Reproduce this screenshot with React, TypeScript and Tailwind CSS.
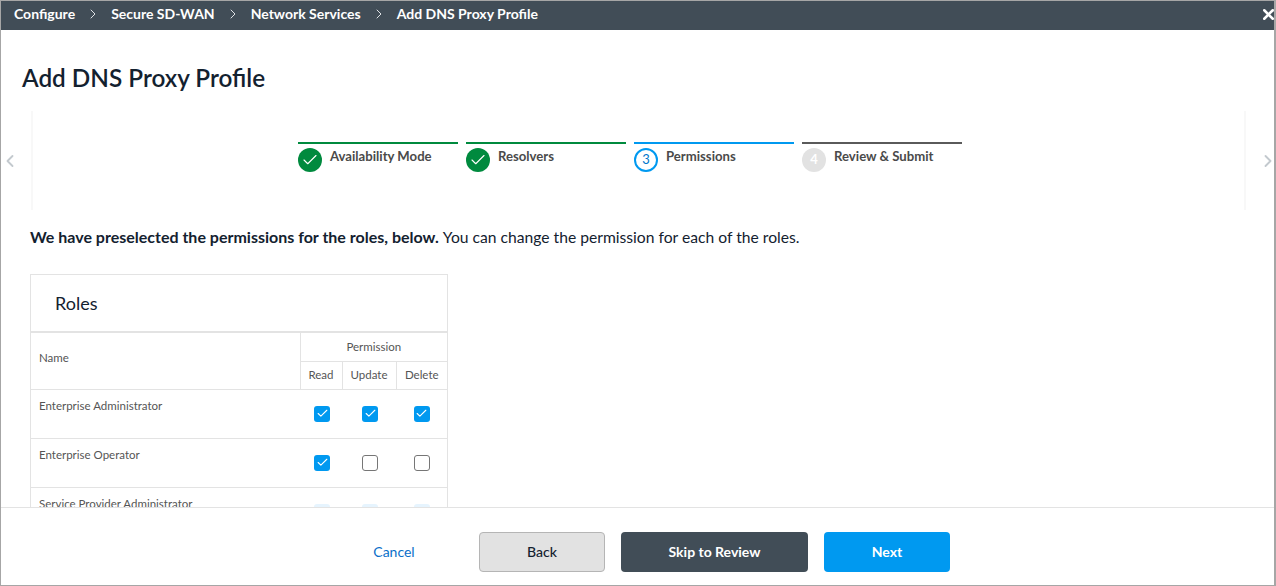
import { Check, ChevronLeft, ChevronRight, X } from 'lucide-react'

const crumbs = ['Configure', 'Secure SD-WAN', 'Network Services', 'Add DNS Proxy Profile']

const roles = [
  { name: 'Enterprise Administrator', read: true, update: true, del: true },
  { name: 'Enterprise Operator', read: true, update: false, del: false },
]

function Step({ label, state, num }: { label: string; state: 'done' | 'active' | 'todo'; num: number }) {
  const lineColor = state === 'done' ? 'border-[#008a3e]' : state === 'active' ? 'border-[#0099f0]' : 'border-[#5a5a5a]'
  return (
    <div className={`w-[160px] border-t-2 ${lineColor} pt-1 flex gap-2`}>
      {state === 'done' && (
        <div className="w-6 h-6 rounded-full bg-[#008a3e] flex items-center justify-center">
          <Check className="w-[18px] h-[18px] text-white" strokeWidth={1.5} />
        </div>
      )}
      {state === 'active' && (
        <div className="w-6 h-6 rounded-full border-2 border-[#0099f0] flex items-center justify-center text-[13px] text-[#0077cc]">
          {num}
        </div>
      )}
      {state === 'todo' && (
        <div className="w-6 h-6 rounded-full bg-[#e2e2e2] flex items-center justify-center text-[13px] font-bold text-white">
          {num}
        </div>
      )}
      <span className="text-[13.15px] font-bold text-[#4a4a4a] leading-4">{label}</span>
    </div>
  )
}

function Box({ checked, faded }: { checked?: boolean; faded?: boolean }) {
  if (faded) return <div className="w-4 h-4 rounded-[3px] bg-[#e6f4fe] mx-auto" />
  if (checked) {
    return (
      <div className="w-4 h-4 rounded-[3px] bg-[#0099f0] mx-auto flex items-center justify-center">
        <Check className="w-[13px] h-[13px] text-white" strokeWidth={2} />
      </div>
    )
  }
  return <div className="w-4 h-4 rounded-[3px] border border-[#767676] bg-white mx-auto" />
}

export default function App() {
  return (
    <div className="w-[1276px] h-[586px] border border-[#a6a6a6] border-r-2 flex flex-col bg-white overflow-hidden font-['Lato',sans-serif]">
      <div className="h-[29px] shrink-0 bg-[#414d57] flex items-center pl-[13px] pb-1 text-white text-sm font-bold relative">
        {crumbs.map((c, i) => (
          <div key={c} className="flex items-center">
            {i > 0 && (
              <div className="w-[36px] flex justify-center">
                <ChevronRight className="w-4 h-4 text-[#dfe3e6]" strokeWidth={1.5} />
              </div>
            )}
            <span>{c}</span>
          </div>
        ))}
        <X className="absolute right-[-3px] top-[5px] w-[17px] h-[17px] text-white" strokeWidth={3.5} />
      </div>

      <div className="flex-1 min-h-0 overflow-hidden">
        <h1 className="text-[24.3px] font-semibold text-[#13212f] leading-8 pl-[21px] pt-[32px]">Add DNS Proxy Profile</h1>

        <div className="mt-[17px] flex items-center h-[99px]">
          <div className="w-[30px] shrink-0 flex justify-start -ml-[1px] mr-[1px]">
            <ChevronLeft className="w-5 h-5 text-[#c3c9ce]" strokeWidth={2.25} />
          </div>
          <div className="w-[1215px] shrink-0 h-full border-x-2 border-[#f8f8f8] pt-[31px] flex justify-center gap-2 pr-[17px]">
            <Step label="Availability Mode" state="done" num={1} />
            <Step label="Resolvers" state="done" num={2} />
            <Step label="Permissions" state="active" num={3} />
            <Step label="Review & Submit" state="todo" num={4} />
          </div>
          <div className="flex-1 flex justify-center pl-[12px]">
            <ChevronRight className="w-5 h-5 text-[#c3c9ce]" strokeWidth={2.25} />
          </div>
        </div>

        <p className="pl-[29px] mt-[17px] text-base leading-5 text-[#13212f]">
          <span className="font-bold">We have preselected the permissions for the roles, below.</span>
          <span className="ml-1 text-[15.67px]">You can change the permission for each of the roles.</span>
        </p>

        <div className="ml-[29px] mt-[27px] w-[418px] border border-[#e3e3e3]">
          <div className="h-[58px] border-b-2 border-[#e3e3e3] flex items-center pl-[24px] text-lg text-[#13212f]">Roles</div>
          <table className="w-full table-fixed border-collapse text-[11.5px] text-[#555555]">
            <colgroup>
              <col className="w-[269px]" />
              <col className="w-[42px]" />
              <col className="w-[54px]" />
              <col />
            </colgroup>
            <tbody>
              <tr className="h-[28px]">
                <td rowSpan={2} className="pl-2 pb-[6px] font-normal border-b border-[#e3e3e3]">Name</td>
                <td colSpan={3} className="text-center border-l border-b border-[#e3e3e3]">Permission</td>
              </tr>
              <tr className="h-[28px]">
                <td className="text-center border-l border-b border-[#e3e3e3]">Read</td>
                <td className="text-center border-l border-b border-[#e3e3e3]">Update</td>
                <td className="text-center border-l border-b border-[#e3e3e3]">Delete</td>
              </tr>
              {roles.map(r => (
                <tr key={r.name} className="h-[49px] border-b border-[#e3e3e3]">
                  <td className="pl-2 align-top pt-[9px] leading-[14px]">{r.name}</td>
                  <td className="align-top pt-4 pl-[2px]"><Box checked={r.read} /></td>
                  <td className="align-top pt-4 pl-[2px]"><Box checked={r.update} /></td>
                  <td className="align-top pt-4"><Box checked={r.del} /></td>
                </tr>
              ))}
              <tr className="h-[49px]">
                <td className="pl-2 align-top pt-[9px] leading-[14px]">Service Provider Administrator</td>
                <td className="align-top pt-4 pl-[2px]"><Box faded /></td>
                <td className="align-top pt-4 pl-[2px]"><Box faded /></td>
                <td className="align-top pt-4"><Box faded /></td>
              </tr>
            </tbody>
          </table>
        </div>
      </div>

      <div className="h-[78px] shrink-0 border-t border-[#e3e3e3] flex items-center pl-[330px] pt-[10px] text-sm">
        <button className="w-[126px] h-10 text-[#0a6fc9]">Cancel</button>
        <button className="w-[126px] h-10 ml-[22px] rounded bg-[#e2e2e2] border border-[#b5b5b5] text-[#13212f] font-medium">Back</button>
        <button className="w-[187px] h-10 ml-4 rounded bg-[#414d57] text-white font-bold">Skip to Review</button>
        <button className="w-[126px] h-10 ml-4 rounded bg-[#0099f0] text-white font-bold">Next</button>
      </div>
    </div>
  )
}
